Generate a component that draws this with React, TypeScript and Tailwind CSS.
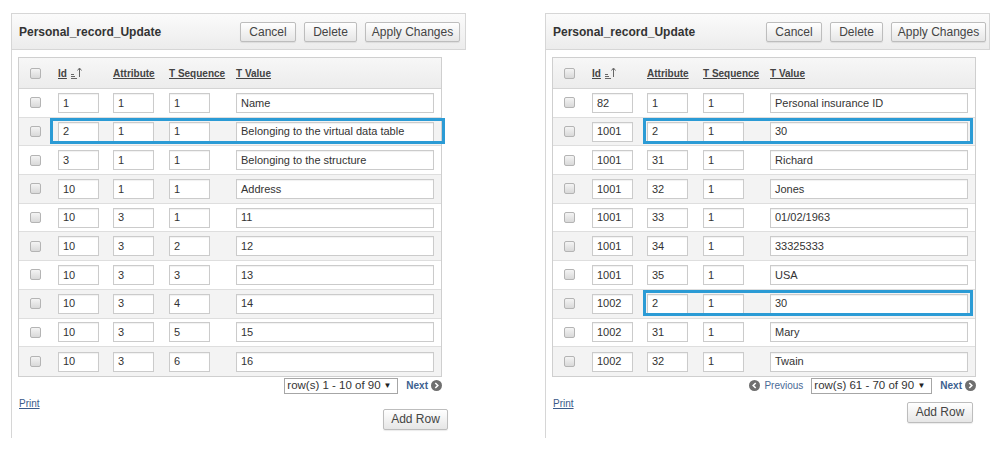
import React from "react";

type Row = [string, string, string, string];

const leftRows: Row[] = [
  ["1", "1", "1", "Name"],
  ["2", "1", "1", "Belonging to the virtual data table"],
  ["3", "1", "1", "Belonging to the structure"],
  ["10", "1", "1", "Address"],
  ["10", "3", "1", "11"],
  ["10", "3", "2", "12"],
  ["10", "3", "3", "13"],
  ["10", "3", "4", "14"],
  ["10", "3", "5", "15"],
  ["10", "3", "6", "16"],
];

const rightRows: Row[] = [
  ["82", "1", "1", "Personal insurance ID"],
  ["1001", "2", "1", "30"],
  ["1001", "31", "1", "Richard"],
  ["1001", "32", "1", "Jones"],
  ["1001", "33", "1", "01/02/1963"],
  ["1001", "34", "1", "33325333"],
  ["1001", "35", "1", "USA"],
  ["1002", "2", "1", "30"],
  ["1002", "31", "1", "Mary"],
  ["1002", "32", "1", "Twain"],
];

function Checkbox() {
  return (
    <div className="w-[11px] h-[11px] rounded-[2px] border border-[#b4b4b4] bg-gradient-to-b from-[#f4f4f4] to-[#d9d9d9]" />
  );
}

function Btn({ label, w, h = "h-[20px]" }: { label: string; w: string; h?: string }) {
  return (
    <div
      className={`${w} ${h} flex items-center justify-center rounded-[2px] border border-[#bdbdbd] bg-gradient-to-b from-[#ffffff] to-[#e6e6e6] text-[12px] text-[#444] shadow-[0_1px_1px_rgba(0,0,0,0.08)] whitespace-nowrap`}
    >
      {label}
    </div>
  );
}

function Field({ value, w }: { value: string; w: string }) {
  return (
    <div
      className={`${w} h-[20px] border border-[#cbcbcb] bg-white flex items-center pl-[4px] text-[11px] text-[#333] shadow-[inset_0_1px_1px_rgba(0,0,0,0.06)] whitespace-nowrap`}
    >
      {value}
    </div>
  );
}

function SortIcon() {
  return (
    <svg width="11" height="12" viewBox="0 0 11 12" className="ml-[4px]">
      <g stroke="#666" strokeWidth="1" fill="none">
        <line x1="0" y1="7.5" x2="3" y2="7.5" />
        <line x1="0" y1="9.5" x2="4" y2="9.5" />
        <line x1="0" y1="11.5" x2="6" y2="11.5" />
        <line x1="8.5" y1="10" x2="8.5" y2="1.5" />
        <path d="M6.5 3.5 L8.5 1 L10.5 3.5" />
      </g>
    </svg>
  );
}

function CircleArrow({ dir }: { dir: "l" | "r" }) {
  return (
    <svg width="11" height="11" viewBox="0 0 11 11">
      <circle cx="5.5" cy="5.5" r="5.5" fill="#6f6f6f" />
      {dir === "r" ? (
        <path d="M4.3 3 L6.8 5.5 L4.3 8" stroke="#fff" strokeWidth="1.6" fill="none" />
      ) : (
        <path d="M6.7 3 L4.2 5.5 L6.7 8" stroke="#fff" strokeWidth="1.6" fill="none" />
      )}
    </svg>
  );
}

function Panel({
  rows,
  highlights,
  hl,
  width,
  hdrPr,
  rangeText,
  selectW,
  showPrev,
  addTop,
  addPr,
  addW,
}: {
  rows: Row[];
  highlights: number[];
  hl: string;
  width: string;
  hdrPr: string;
  rangeText: string;
  selectW: string;
  showPrev: boolean;
  addTop: string;
  addPr: string;
  addW: string;
}) {
  return (
    <div className={`${width} flex flex-col`}>
      {/* header */}
      <div
        className={`h-[37px] flex items-center justify-between pl-[7px] ${hdrPr} border border-[#d6d6d6] bg-gradient-to-b from-[#fbfbfb] to-[#ececec]`}
      >
        <div className="text-[12px] font-bold text-[#333]">Personal_record_Update</div>
        <div className="flex gap-[8px]">
          <Btn label="Cancel" w="w-[56px]" />
          <Btn label="Delete" w="w-[53px]" />
          <Btn label="Apply Changes" w="w-[95px]" />
        </div>
      </div>
      {/* body */}
      <div className="h-[388px] border-l border-[#d6d6d6] pl-[6px] pt-[7px] flex flex-col">
        <div className="w-[424px] border border-[#cfcfcf] relative">
          {/* table header */}
          <div className="h-[31px] flex items-center bg-gradient-to-b from-[#f7f7f7] to-[#ececec] border-b border-[#d4d4d4] text-[10px] font-bold text-[#444] whitespace-nowrap">
            <div className="w-[39px] pl-[11px]">
              <Checkbox />
            </div>
            <div className="w-[55px] flex items-center">
              <span className="underline">Id</span>
              <SortIcon />
            </div>
            <div className="w-[56px] underline">Attribute</div>
            <div className="w-[67px] underline">T Sequence</div>
            <div className="underline">T Value</div>
          </div>
          {/* rows */}
          {rows.map((r, i) => (
            <div
              key={i}
              className={`h-[28.7px] flex items-center relative ${
                i < rows.length - 1 ? "border-b border-[#dedede]" : ""
              } ${i % 2 === 1 ? "bg-[#f3f3f3]" : "bg-white"}`}
            >
              <div className="w-[39px] pl-[11px]">
                <Checkbox />
              </div>
              <div className="w-[55px]">
                <Field value={r[0]} w="w-[41px]" />
              </div>
              <div className="w-[56px]">
                <Field value={r[1]} w="w-[41px]" />
              </div>
              <div className="w-[67px]">
                <Field value={r[2]} w="w-[41px]" />
              </div>
              <Field value={r[3]} w="w-[198px]" />
              {highlights.includes(i) && (
                <div className={`absolute top-[0px] h-[26px] border-[3px] border-[#2b9bd5] ${hl}`} />
              )}
            </div>
          ))}
        </div>
        {/* pagination */}
        <div className="w-[424px] flex items-center justify-end mt-[1px] h-[16px]">
          {showPrev && (
            <div className="flex items-center mr-[8px]">
              <CircleArrow dir="l" />
              <span className="ml-[4px] text-[10px] text-[#4a6a96]">Previous</span>
            </div>
          )}
          <div
            className={`${selectW} shrink-0 h-[16px] border border-[#a6a6a6] bg-white flex items-center pl-[2px] text-[11.5px] text-[#333] whitespace-nowrap leading-none`}
          >
            <span>{rangeText}</span>
            <span className="ml-auto mr-[6px] text-[8px] text-[#222]">▼</span>
          </div>
          <span className="ml-[8px] text-[10px] font-bold text-[#3d5f8f]">Next</span>
          <span className="ml-[3px] flex">
            <CircleArrow dir="r" />
          </span>
        </div>
        <div className="mt-[4px] pl-[1px] text-[10px] text-[#3a5a8a] underline leading-[12px]">Print</div>
        <div className={`flex justify-end ${addTop} ${addPr}`}>
          <Btn label="Add Row" w={addW} h="h-[21px]" />
        </div>
      </div>
    </div>
  );
}

export default function App() {
  return (
    <div
      className="w-[1000px] h-[450px] bg-white flex pt-[13px] pl-[11px]"
      style={{ fontFamily: '"Liberation Sans", Arial, sans-serif' }}
    >
      <Panel
        rows={leftRows}
        highlights={[1]}
        hl="left-[31px] w-[395px]"
        width="w-[455px]"
        hdrPr="pr-[5px]"
        rangeText="row(s) 1 - 10 of 90"
        selectW="w-[114px]"
        showPrev={false}
        addTop="mt-[-1px]"
        addPr="pr-[18px]"
        addW="w-[65px]"
      />
      <div className="w-[79px]" />
      <Panel
        rows={rightRows}
        highlights={[1, 7]}
        hl="left-[90px] w-[330px]"
        width="w-[445px]"
        hdrPr="pr-[3px]"
        rangeText="row(s) 61 - 70 of 90"
        selectW="w-[121px]"
        showPrev={true}
        addTop="mt-[-8px]"
        addPr="pr-[17px]"
        addW="w-[66px]"
      />
    </div>
  );
}
